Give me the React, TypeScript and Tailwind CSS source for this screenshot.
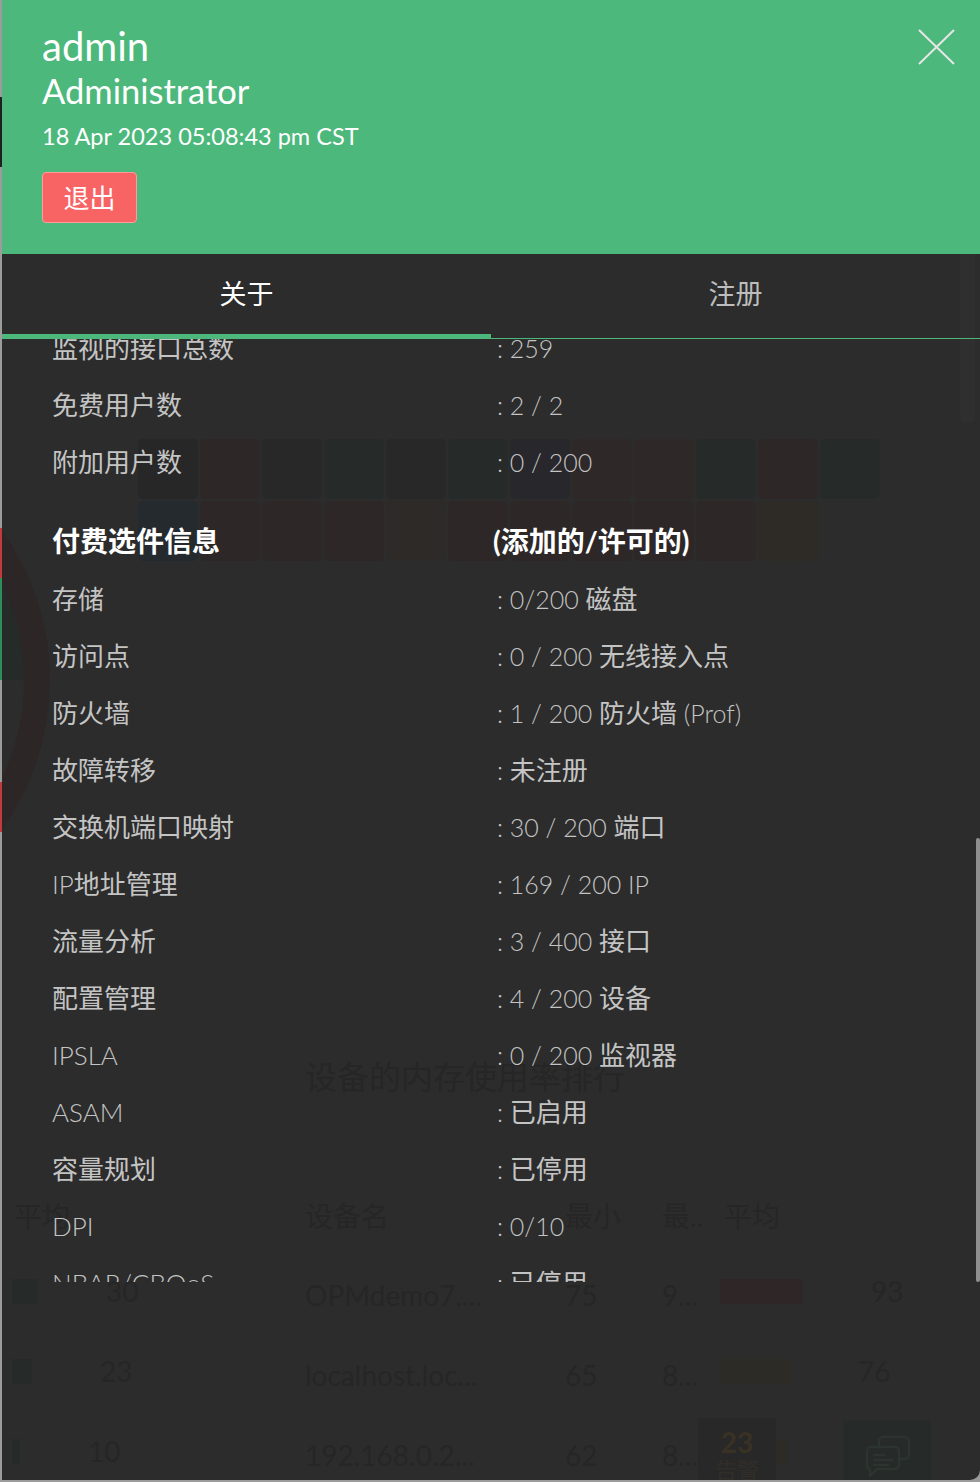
import React from "react";

const topRows: [string, string][] = [
  ["监视的接口总数", ": 259"],
  ["免费用户数", ": 2 / 2"],
  ["附加用户数", ": 0 / 200"],
];

const optionRows: [string, string][] = [
  ["存储", ": 0/200 磁盘"],
  ["访问点", ": 0 / 200 无线接入点"],
  ["防火墙", ": 1 / 200 防火墙 (Prof)"],
  ["故障转移", ": 未注册"],
  ["交换机端口映射", ": 30 / 200 端口"],
  ["IP地址管理", ": 169 / 200 IP"],
  ["流量分析", ": 3 / 400 接口"],
  ["配置管理", ": 4 / 200 设备"],
  ["IPSLA", ": 0 / 200 监视器"],
  ["ASAM", ": 已启用"],
  ["容量规划", ": 已停用"],
  ["DPI", ": 0/10"],
  ["NBAR/CBQoS", ": 已停用"],
];

const gridRow1 = [
  "bg-[#272727]",
  "bg-[#2e2727]",
  "bg-[#282828]",
  "bg-[#262a29]",
  "bg-[#282828]",
  "bg-[#262a29]",
  "bg-[#28272c]",
  "bg-[#2e2828]",
  "bg-[#2e2828]",
  "bg-[#262a29]",
  "bg-[#2e2727]",
  "bg-[#262a29]",
];
const gridRow2 = [
  "bg-[#252a2e]",
  "bg-[#2e2727]",
  "bg-[#2e2727]",
  "bg-[#2e2727]",
  "bg-[#2d2a27]",
  "bg-[#2e2727]",
  "bg-[#2e2727]",
  "bg-[#2e2727]",
  "bg-[#2e2727]",
  "bg-[#2e2727]",
  "bg-[#2e2b27]",
];

const tableRows = [
  { lw: "w-[26px]", num: "30", name: "OPMdemo7....", min: "75", max: "9...", bw: "w-[83px]", bc: "bg-[#2e2627]", avg: "93" },
  { lw: "w-[20px]", num: "23", name: "localhost.loc...", min: "65", max: "8...", bw: "w-[70px]", bc: "bg-[#2c2b26]", avg: "76" },
  { lw: "w-[8px]", num: "10", name: "192.168.0.2...", min: "62", max: "8...", bw: "w-[67px]", bc: "bg-[#2d2b25]", avg: "71" },
];

// Split text into CJK runs (regular weight) and Latin runs (light weight)
function Mixed({ text, latinClass }: { text: string; latinClass: string }) {
  const parts = text.split(/([\u3400-\u9fff]+)/).filter((p) => p.length > 0);
  return (
    <>
      {parts.map((p, i) =>
        /[\u3400-\u9fff]/.test(p) ? (
          <span key={i} className="font-normal">
            {p}
          </span>
        ) : (
          <span key={i} className={latinClass}>
            {p}
          </span>
        )
      )}
    </>
  );
}

function LeftStrip() {
  return (
    <div className="flex w-[2px] shrink-0 flex-col">
      <div className="h-[97px] bg-[#9c9c9c]" />
      <div className="h-[70px] bg-[#1f1f1f]" />
      <div className="h-[361px] bg-[#9c9c9c]" />
      <div className="h-[50px] bg-[#bf3b3e]" />
      <div className="h-[102px] bg-[#2f8d5b]" />
      <div className="h-[102px] bg-[#9c9c9c]" />
      <div className="h-[50px] bg-[#bf3b3e]" />
      <div className="h-[650px] bg-[#9c9c9c]" />
    </div>
  );
}

function Dashboard() {
  return (
    <div className="flex flex-col">
      <div className="flex h-[423px] justify-end pr-[5px]">
        <div className="h-full w-[15px] rounded-b-[6px] bg-[#2f2f2f]" />
      </div>
      <div className="flex h-[417px]">
        <svg width="50" height="320" viewBox="0 0 50 320" className="mt-[97px] shrink-0">
          <circle cx="-208" cy="160" r="243" fill="none" stroke="#2d2626" strokeWidth="26" />
          <path d="M -208 -70 A 230 230 0 0 1 22 160 L -18 160 A 190 190 0 0 0 -208 -30 Z" fill="#262a28" />
        </svg>
        <div className="ml-[86px] mt-[16px] flex flex-col gap-[2px]">
          <div className="flex gap-[2px]">
            {gridRow1.map((c, i) => (
              <div key={i} className={`h-[60px] w-[60px] rounded-[5px] ${c}`} />
            ))}
          </div>
          <div className="flex gap-[2px]">
            {gridRow2.map((c, i) => (
              <div key={i} className={`h-[60px] w-[60px] rounded-[5px] ${c}`} />
            ))}
          </div>
        </div>
      </div>
      <div className="mt-[221px] pl-[303px] text-[32px] leading-[32px] text-[#262626]">设备的内存使用率排行</div>
      <div className="mt-[103px] grid h-[40px] grid-cols-[293px_260px_97px_58px_1fr] items-center pl-[10px] text-[28px] leading-[40px] text-[#262626]">
        <div className="ml-[2px]">平均</div>
        <div>设备名</div>
        <div>最小</div>
        <div>最..</div>
        <div className="ml-[4px]">平均</div>
      </div>
      <div className="mt-[15px] flex flex-col">
        {tableRows.map((r, i) => (
          <div
            key={i}
            className="grid h-[80px] grid-cols-[293px_260px_97px_58px_1fr] items-center pl-[10px] text-[28px] leading-[32px] text-[#262626]"
          >
            <div className="flex items-center">
              <div className={`h-[25px] ${r.lw} bg-[#262a28]`} />
              <div className="ml-[68px]">{r.num}</div>
            </div>
            <div className="whitespace-nowrap pt-[8px]">{r.name}</div>
            <div className="pt-[8px]">{r.min}</div>
            <div className="pt-[8px]">{r.max}</div>
            <div className="flex items-center">
              <div className={`h-[25px] ${r.bw} ${r.bc}`} />
              <div className="ml-[68px]">{r.avg}</div>
            </div>
          </div>
        ))}
      </div>
      <div className="absolute left-[696px] top-[1418px] flex h-[70px] w-[78px] flex-col items-center bg-[#282828] pt-[10px]">
        <div className="text-[28px] font-bold leading-[28px] text-[#383124]">23</div>
        <div className="mt-[2px] text-[22px] leading-[24px] text-[#312e29]">告警</div>
      </div>
      <div className="absolute left-[841px] top-[1420px] h-[70px] w-[88px] bg-[#262a28] pl-[22px] pt-[15px]">
        <svg width="46" height="44" viewBox="0 0 46 44" fill="none" stroke="#2c3430" strokeWidth="2.5" strokeLinejoin="round">
          <rect x="14" y="2" width="30" height="22" rx="4" />
          <path d="M6 12 H30 a4 4 0 0 1 4 4 V30 a4 4 0 0 1 -4 4 H12 L5 41 V34 a4 4 0 0 1 -3 -4 V16 a4 4 0 0 1 4 -4 Z" fill="#262a28" />
          <path d="M8 20 H20 M8 25 H28 M8 30 H24" />
        </svg>
      </div>
    </div>
  );
}

function InfoRow({ label, value }: { label: string; value: string }) {
  return (
    <div className="flex h-[57px] items-center pl-[50px] text-[26px] leading-[32px] text-[#c4c4c4]">
      <div className="w-[445px] shrink-0">
        <Mixed text={label} latinClass="font-light" />
      </div>
      <div className="whitespace-pre">
        <Mixed text={value} latinClass="font-light text-[25px]" />
      </div>
    </div>
  );
}

function Drawer() {
  return (
    <div className="absolute inset-0 z-10 flex flex-col">
      <header className="relative h-[254px] shrink-0 bg-[#4cb87c] pl-[40px] pt-[24px] text-white">
        <div className="text-[40px] leading-[44px]">admin</div>
        <div className="mt-[2px] text-[34.5px] leading-[42px]">Administrator</div>
        <div className="mt-[8px] text-[23.5px] leading-[32px]">18 Apr 2023 05:08:43 pm CST</div>
        <button className="mt-[20px] flex h-[51px] w-[95px] items-center justify-center rounded-[4px] border border-[#ff9d9d] bg-[#f86464] text-[26px] leading-none text-white">
          退出
        </button>
        <svg
          className="absolute right-[25px] top-[29px]"
          width="37"
          height="36"
          viewBox="0 0 37 36"
          fill="none"
          stroke="#e6e6e6"
          strokeWidth="2"
        >
          <path d="M1 1 L36 35 M36 1 L1 35" />
        </svg>
      </header>
      <div className="flex h-[85px] shrink-0 border-b border-[#4cb87c]">
        <div className="flex flex-1 items-center justify-center border-b-4 border-[#4cb87c] text-[27px] text-white">关于</div>
        <div className="flex flex-1 items-center justify-center border-b-4 border-transparent text-[27px] text-[#bdbdbd]">注册</div>
      </div>
      <div className="relative h-[943px] shrink-0 overflow-hidden">
        <div className="-mt-[20px] flex flex-col">
          {topRows.map(([l, v]) => (
            <InfoRow key={l} label={l} value={v} />
          ))}
          <div className="mt-[21px] flex h-[59px] items-center pl-[50px] text-[28px] font-bold leading-[32px] text-white">
            <div className="w-[445px] shrink-0">付费选件信息</div>
            <div className="-ml-[4px]">(添加的/许可的)</div>
          </div>
          {optionRows.map(([l, v]) => (
            <InfoRow key={l} label={l} value={v} />
          ))}
        </div>
        <div className="absolute right-0 top-[499px] h-[444px] w-[4px] rounded-full bg-[#8f8f8f]" />
      </div>
    </div>
  );
}

export default function App() {
  return (
    <div className="flex h-[1482px] w-[980px] overflow-hidden bg-[#9c9c9c] font-[Lato,'Noto_Sans_CJK_SC',sans-serif]">
      <LeftStrip />
      <div className="relative h-[1480px] w-[978px] shrink-0 overflow-hidden rounded-br-[10px] bg-[#2c2c2c]">
        <Dashboard />
        <Drawer />
      </div>
    </div>
  );
}
